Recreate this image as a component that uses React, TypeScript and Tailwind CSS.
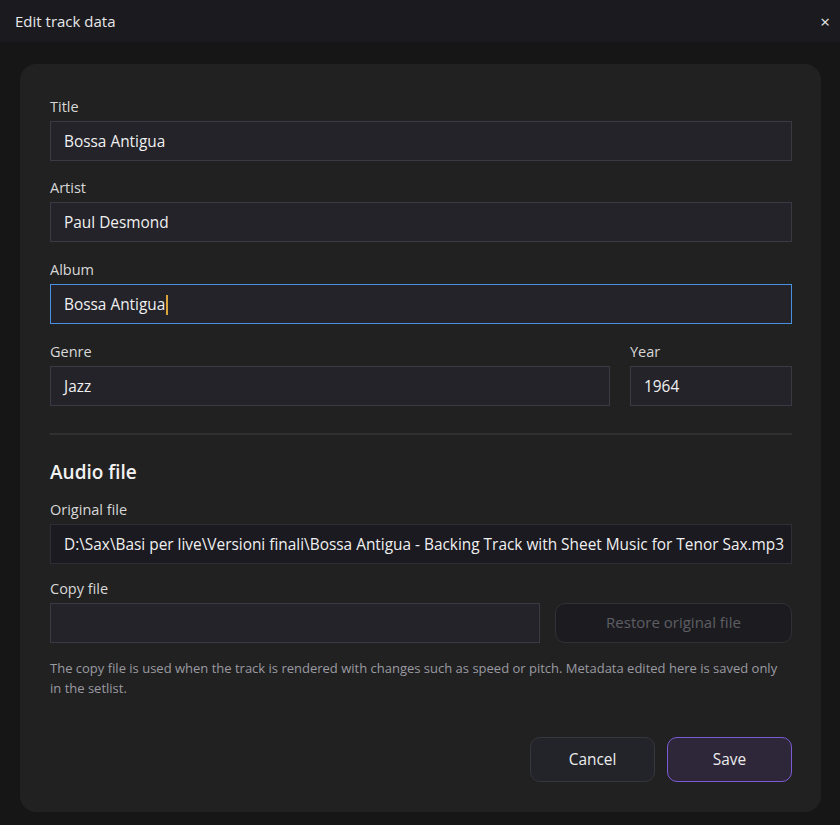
export default function App() {
  const font = { fontFamily: '"Open Sans", "Noto Sans", sans-serif' }
  return (
    <div className="flex h-[825px] w-[840px] flex-col bg-[#161616] text-[#e6e6e6]" style={font}>
      {/* Header */}
      <div className="flex h-[42px] items-center justify-between bg-[#1a1a1f] pl-[15px] pr-[10px]">
        <span className="text-[15px] text-[#e8e8e8]">Edit track data</span>
        <span className="text-[17px] leading-none text-[#e8e8e8]">×</span>
      </div>

      <div className="pl-[20px] pr-[19px] pt-[22px]">
        <div className="rounded-[16px] bg-[#212121] pl-[30px] pr-[29px] pt-[32px] pb-[30px]">
          <Field label="Title" value="Bossa Antigua" />
          <Field label="Artist" value="Paul Desmond" className="mt-[16px]" />
          <Field label="Album" value="Bossa Antigua" focused className="mt-[17px]" />
          <div className="mt-[17px] flex gap-[20px]">
            <Field label="Genre" value="Jazz" className="flex-1" />
            <Field label="Year" value="1964" className="w-[162px]" />
          </div>

          <div className="mt-[27px] h-[2px] bg-[#303030]" />

          <h2 className="mt-[23px] text-[19px] font-semibold text-[#f2f2f2]">Audio file</h2>

          <Field
            label="Original file"
            value="D:\Sax\Basi per live\Versioni finali\Bossa Antigua - Backing Track with Sheet Music for Tenor Sax.mp3"
            dark
            className="mt-[12px]"
          />

          <div className="mt-[14px] flex items-end gap-[15px]">
            <Field label="Copy file" value="" className="w-[490px]" />
            <button className="h-[40px] flex-1 rounded-[10px] border border-[#303036] bg-[#1c1c20] text-[15px] text-[#5e5e64]">
              Restore original file
            </button>
          </div>

          {/* helper note */}
          <p className="mt-[15px] pr-[12px] text-[13px] leading-[20px] text-[#9a9aa2]">
            The copy file is used when the track is rendered with changes such as speed or pitch. Metadata edited here is
            saved only in the setlist.
          </p>

          <div className="mt-[39px] flex justify-end gap-[12px]">
            <button className="h-[45px] w-[125px] rounded-[10px] border border-[#36363e] bg-[#23242a] pt-[1px] text-[15.4px] text-[#ececec]">
              Cancel
            </button>
            <button className="h-[45px] w-[125px] rounded-[10px] border border-[#7b5bd4] bg-[#2e2639] pt-[1px] text-[15.4px] text-[#ececec]">
              Save
            </button>
          </div>
        </div>
      </div>
    </div>
  )
}

function Field({
  label,
  value,
  focused,
  dark,
  className = "",
}: {
  label: string
  value: string
  focused?: boolean
  dark?: boolean
  className?: string
}) {
  const border = focused ? "border-[#4a90e2]" : dark ? "border-[#2e2e36]" : "border-[#3a3a44]"
  const bg = dark ? "bg-[#1b1a20]" : "bg-[#232329]"
  return (
    <div className={className}>
      <div className="mb-[5px] pt-[1px] text-[14.5px] leading-[19px] text-[#d8d8d8]">{label}</div>
      <div className={`flex h-[40px] items-center overflow-hidden whitespace-nowrap border px-[13px] pt-[2px] text-[15.4px] text-[#f0f0f0] ${border} ${bg}`}>
        {value}
        {focused && <span className="ml-[1px] inline-block h-[20px] w-[2px] bg-[#d9a53a]" />}
      </div>
    </div>
  )
}
